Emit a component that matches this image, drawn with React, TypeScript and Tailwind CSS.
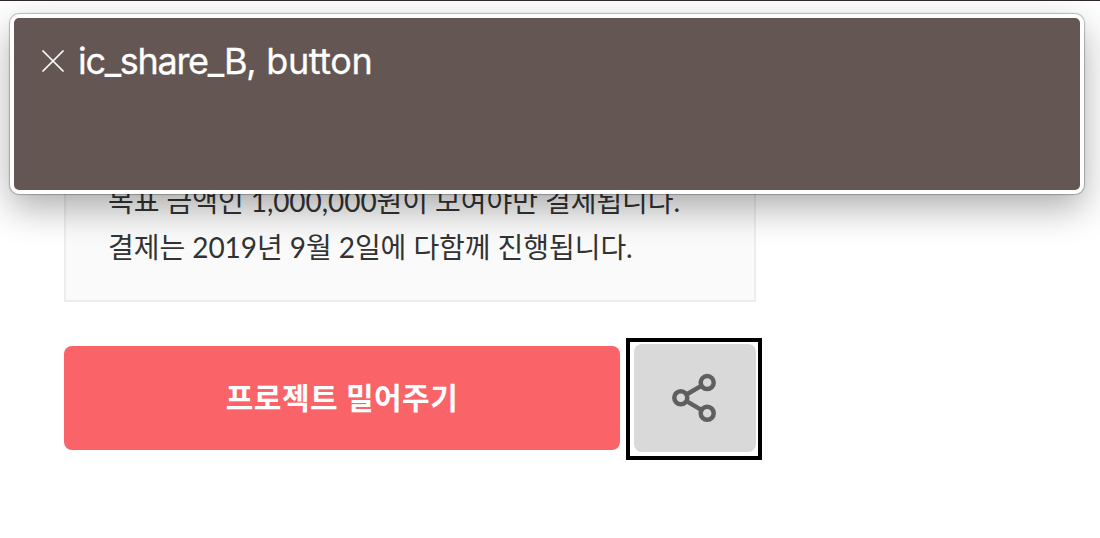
const NOTICE_LINES = [
	'목표 금액인 1,000,000원이 모여야만 결제됩니다.',
	'결제는 2019년 9월 2일에 다함께 진행됩니다.',
];

const CloseIcon = () => (
	<svg
		width="24"
		height="24"
		viewBox="0 0 24 24"
		fill="none"
		stroke="#ffffff"
		strokeWidth="1.7">
		<path d="M1.5 1.5 22.5 22.5M22.5 1.5 1.5 22.5" />
	</svg>
);

const ShareIcon = () => (
	<svg
		width="46"
		height="50"
		viewBox="0 0 46 50"
		fill="none"
		stroke="#5f5f5f"
		strokeWidth="4.5">
		<circle cx="8.8" cy="24.8" r="6.5" />
		<circle cx="35.2" cy="9.6" r="6.5" />
		<circle cx="35.2" cy="40.2" r="6.5" />
		<path d="M14.5 21.5 29.3 12.9M14.5 28.1 29.3 36.9" />
	</svg>
);

const VoiceOverPanel = () => (
	<div className="absolute left-[10px] top-[13px] h-[180px] w-[1074px] rounded-[9px] border-4 border-white bg-white shadow-[0_0_1px_1px_rgba(0,0,0,0.25),0_14px_36px_rgba(0,0,0,0.32)]">
		<div className="flex h-full items-start gap-[13px] rounded-[5px] bg-[#645653] pl-[27px] pt-[18px] text-white">
			<div className="pt-[13px]">
				<CloseIcon />
			</div>
			<p className="whitespace-nowrap font-['Inter',sans-serif] text-[36px] leading-[50px] tracking-[-1.3px] [-webkit-text-stroke:0.3px_white] [word-spacing:2px]">
				ic_share_B, <span className="tracking-[-0.4px]">button</span>
			</p>
		</div>
	</div>
);

const App = () => {
	return (
		<div className="relative h-[538px] w-[1100px] overflow-hidden border-t border-[#2e282c] bg-white font-['Lato','Noto_Sans_CJK_KR',sans-serif]">
			<main className="flex w-[762px] flex-col pl-16 pt-[99px]">
				<section className="flex h-[202px] w-[692px] flex-col justify-end border-2 border-[#ededed] bg-[#fafafa] pb-[30px] pl-[42px] text-[28px] leading-[46px] tracking-[-0.06px] text-[#333333]">
					{NOTICE_LINES.map((line) => (
						<p key={line} className="whitespace-nowrap">
							{line}
						</p>
					))}
				</section>
				<div className="mt-9 flex items-center justify-between">
					<button
						type="button"
						className="mt-[-2px] h-[104px] w-[556px] cursor-pointer rounded-lg bg-[#fa6469] pb-0.5 text-[30px] font-bold tracking-[0.5px] text-white">
						프로젝트 밀어주기
					</button>
					<div className="h-[122px] w-[136px] border-4 border-black bg-white pl-1 pt-0.5">
						<button
							type="button"
							aria-label="ic_share_B"
							className="flex h-[108px] w-[122px] cursor-pointer items-center justify-center rounded-lg bg-[#d9d9d9]">
							<ShareIcon />
						</button>
					</div>
				</div>
			</main>
			<VoiceOverPanel />
		</div>
	);
};

export default App;
